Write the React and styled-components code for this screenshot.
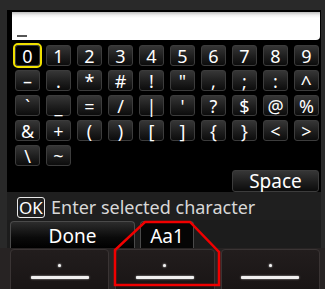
import React from "react";
import styled, { createGlobalStyle } from "styled-components";

const Global = createGlobalStyle`
  html, body { margin: 0; padding: 0; background: #000; }
  body { width: 325px; height: 289px; overflow: hidden; }
`;

const Screen = styled.div`
  width: 325px;
  height: 289px;
  background: #292929;
  display: flex;
  flex-direction: column;
  font-family: "Noto Sans", "DejaVu Sans", sans-serif;
  overflow: hidden;
  position: relative;
`;

const Panel = styled.div`
  margin: 10px 4px 0 7px;
  height: 183px;
  background: #000;
  display: flex;
  flex-direction: column;
`;

const Input = styled.div`
  margin: 2px 1px 0 5px;
  height: 28px;
  background: linear-gradient(#bdbdbd 0px, #eeeeee 3px, #fff 6px);
  border-radius: 0 0 4px 0;
  position: relative;
`;

const Cursor = styled.span`
  position: absolute;
  left: 5px;
  bottom: 3px;
  width: 10px;
  height: 2px;
  background: #555;
`;

const Keys = styled.div`
  margin: 5px 0 0 8px;
  display: grid;
  grid-template-columns: repeat(10, 25px);
  grid-template-rows: repeat(5, 21px) 22px;
  column-gap: 6px;
  row-gap: 4px;
`;

const Key = styled.div`
  box-sizing: border-box;
  border-radius: 3px;
  border: 1px solid #3c3c3c;
  background: ${(p) =>
    p.$selected ? "#000" : "linear-gradient(#363636, #1e1e1e 55%, #0c0c0c)"};
  outline: ${(p) => (p.$selected ? "2px solid #f0e000" : "none")};
  color: #fff;
  font-size: 18px;
  line-height: 1;
  display: flex;
  align-items: center;
  justify-content: center;
  grid-column: ${(p) => p.$span || "auto"};
  grid-row: ${(p) => p.$row || "auto"};
`;

const Glyph = styled.span`
  display: inline-block;
  transform: ${(p) => p.$tf || "none"};
`;

const SpaceKey = styled(Key)`
  font-size: 19px;
  padding-top: 1px;
`;

const HelpBar = styled.div`
  height: 28px;
  margin-left: 7px;
  margin-right: 4px;
  background: #1f1f1f;
  display: flex;
  align-items: center;
  padding: 2px 0 0 10px;
  box-sizing: border-box;
  gap: 6px;
  color: #d8d8d8;
  font-size: 18px;
`;

const OkBox = styled.span`
  box-sizing: border-box;
  height: 21px;
  width: 28px;
  border: 1.5px solid #e8e8e8;
  border-radius: 3px;
  color: #fff;
  font-size: 17px;
  line-height: 1;
  display: flex;
  align-items: center;
  justify-content: center;
  padding-top: 1px;
`;

const TabRow = styled.div`
  height: 28px;
  display: flex;
  align-items: flex-end;
  gap: 5px;
  padding-left: 10px;
  background: linear-gradient(90deg, #292929 0 7px, #1c1c1c 7px 321px, #292929 321px);
`;

const Tab = styled.div`
  box-sizing: border-box;
  width: ${(p) => p.$w}px;
  height: 27px;
  border: 1px solid #4a4a4a;
  border-bottom: none;
  border-radius: 4px 4px 0 0;
  background: ${(p) =>
    p.$active ? "#050505" : "linear-gradient(#2c2c2c, #0a0a0a 60%, #000)"};
  color: #fff;
  font-size: 19px;
  display: flex;
  align-items: center;
  justify-content: center;
  padding-top: 2px;
`;

const BottomBar = styled.div`
  height: 40px;
  background: #272323;
  display: flex;
  gap: 6px;
  padding: 1px 5px 0 10px;
`;

const SoftButton = styled.div`
  box-sizing: border-box;
  flex: 1;
  height: 45px;
  border-radius: 4px;
  border: 1px solid #3a3434;
  background: linear-gradient(#221d1d, #181414);
  display: flex;
  flex-direction: column;
  align-items: center;
  padding-top: 14px;
  gap: 9px;
`;

const Dot = styled.span`
  width: 3px;
  height: 3px;
  border-radius: 50%;
  background: #f4f4f4;
  box-shadow: 0 0 2px #fff;
`;

const Line = styled.span`
  width: 58px;
  height: 3px;
  border-radius: 1px;
  background: #f0f0f0;
  box-shadow: 0 0 2px #bbb;
`;

const Highlight = styled.svg`
  position: absolute;
  left: 0;
  top: 0;
  pointer-events: none;
`;

const rows = [
  ["0", "1", "2", "3", "4", "5", "6", "7", "8", "9"],
  ["–", ".", "*", "#", "!", "\"", ",", ";", ":", "^"],
  ["`", "_", "=", "/", "|", "'", "?", "$", "@", "%"],
  ["&", "+", "(", ")", "[", "]", "{", "}", "<", ">"],
  ["\\", "~"],
];

const transforms = {
  "^": "scale(1.1, 1.15) translateY(1px)",
};

export default function App() {
  return (
    <>
      <Global />
      <Screen>
        <Panel>
          <Input>
            <Cursor />
          </Input>
          <Keys>
            {rows.map((r, ri) =>
              r.map((c, ci) => (
                <Key key={`${ri}-${ci}`} $selected={ri === 0 && ci === 0}>
                  <Glyph $tf={transforms[c]}>{c}</Glyph>
                </Key>
              ))
            )}
            <SpaceKey $span="8 / 11" $row={6}>Space</SpaceKey>
          </Keys>
        </Panel>
        <HelpBar>
          <OkBox>OK</OkBox>
          <span>Enter selected character</span>
        </HelpBar>
        <TabRow>
          <Tab $w={125}>Done</Tab>
          <Tab $w={54} $active>Aa1</Tab>
        </TabRow>
        <BottomBar>
          <SoftButton><Dot /><Line /></SoftButton>
          <SoftButton><Dot /><Line /></SoftButton>
          <SoftButton><Dot /><Line /></SoftButton>
        </BottomBar>
        <Highlight width="325" height="289" viewBox="0 0 325 289">
          <polygon
            points="145,222 190,222 219,252 219,285 115,285 115,250"
            fill="none"
            stroke="#f00000"
            strokeWidth="2.5"
            strokeLinejoin="miter"
          />
        </Highlight>
      </Screen>
    </>
  );
}
